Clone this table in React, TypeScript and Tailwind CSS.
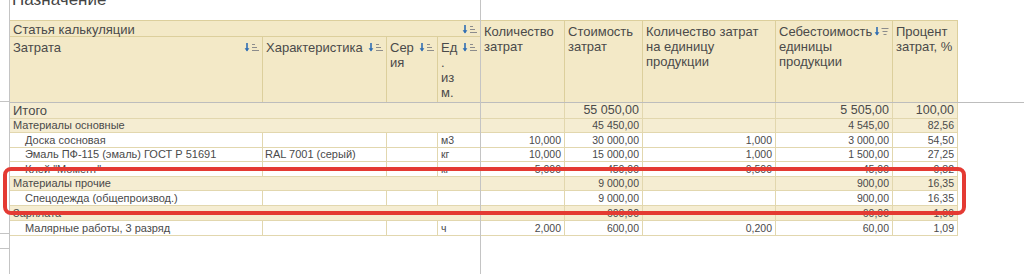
import React from "react"

// column template shared by header and body (widths include the right border)
const COLS = "grid grid-cols-[253px_124px_51px_43px_84px_78px_133px_117px_65px]"

type Row = {
    kind: "total" | "group" | "item"
    name: string
    h: string
    feature?: string
    unit?: string
    qty?: string
    cost?: string
    perUnit?: string
    unitCost?: string
    pct?: string
}

const ROWS: Row[] = [
    { kind: "total", name: "Итого", h: "h-[16px]", cost: "55 050,00", unitCost: "5 505,00", pct: "100,00" },
    { kind: "group", name: "Материалы основные", h: "h-[14px]", cost: "45 450,00", unitCost: "4 545,00", pct: "82,56" },
    { kind: "item", name: "Доска сосновая", h: "h-[15px]", unit: "м3", qty: "10,000", cost: "30 000,00", perUnit: "1,000", unitCost: "3 000,00", pct: "54,50" },
    { kind: "item", name: "Эмаль ПФ-115 (эмаль) ГОСТ Р 51691", h: "h-[14px]", feature: "RAL 7001 (серый)", unit: "кг", qty: "10,000", cost: "15 000,00", perUnit: "1,000", unitCost: "1 500,00", pct: "27,25" },
    { kind: "item", name: "Клей \"Момент\"", h: "h-[15px]", unit: "кг", qty: "5,000", cost: "450,00", perUnit: "0,500", unitCost: "45,00", pct: "0,82" },
    { kind: "group", name: "Материалы прочие", h: "h-[14px]", cost: "9 000,00", unitCost: "900,00", pct: "16,35" },
    { kind: "item", name: "Спецодежда (общепроизвод.)", h: "h-[15px]", cost: "9 000,00", unitCost: "900,00", pct: "16,35" },
    { kind: "group", name: "Зарплата", h: "h-[15px]", cost: "600,00", unitCost: "60,00", pct: "1,09" },
    { kind: "item", name: "Малярные работы, 3 разряд", h: "h-[15px]", unit: "ч", qty: "2,000", cost: "600,00", perUnit: "0,200", unitCost: "60,00", pct: "1,09" },
]

//blue arrow + lines, the 1C sort marker
function SortIcon({ filter = false }: { filter?: boolean }) {
    return (
        <svg width="16" height="11" viewBox="0 0 16 11" className="shrink-0">
            <path d="M3 1v7.5" stroke="#2f6db3" strokeWidth="1.6" />
            <path d="M0.6 6.2 3 9.6 5.4 6.2z" fill="#2f6db3" />
            {filter ? (
                <g stroke="#8c8c8c" strokeWidth="1">
                    <path d="M7.5 2.5h7" />
                    <path d="M8.5 5.5h5" />
                    <path d="M9.5 8.5h3" />
                </g>
            ) : (
                <g stroke="#8c8c8c" strokeWidth="1">
                    <path d="M8 2.5h3" />
                    <path d="M8 5.5h5" />
                    <path d="M8 8.5h7" />
                </g>
            )}
        </svg>
    )
}

function HeadCell({ children, icon, className = "" }: { children: React.ReactNode, icon?: "sort" | "filter", className?: string }) {
    return (
        <div className={`flex items-start justify-between border-r border-b border-[#dccf9c] pl-[3px] pr-[2px] pt-[3px] ${className}`}>
            <div className="leading-[15px]">{children}</div>
            {icon && <div className="pt-[2px]"><SortIcon filter={icon === "filter"} /></div>}
        </div>
    )
}

function Num({ v, big }: { v?: string, big?: boolean }) {
    return (
        <div className={`flex items-center justify-end border-r border-[#e2d7ae] pr-[3px] ${big ? "text-[12.5px]" : "text-[10.5px]"}`}>
            {v}
        </div>
    )
}

function BodyRow({ r }: { r: Row }) {
    const shaded = r.kind !== "item"
    const big = r.kind === "total"
    return (
        <div className={`${COLS} ${r.h} border-b border-[#e2d7ae] leading-none ${shaded ? "bg-[#f5edd2]" : "bg-white"}`}>
            {shaded ? (
                <div className={`col-span-4 flex items-center border-r border-[#e2d7ae] pl-[3px] ${big ? "text-[13px]" : "text-[11px]"}`}>{r.name}</div>
            ) : (
                <>
                    <div className="flex items-center border-r border-[#e2d7ae] pl-[15px] text-[11px] whitespace-nowrap overflow-hidden">{r.name}</div>
                    <div className="flex items-center border-r border-[#e2d7ae] pl-[2px] text-[11px] whitespace-nowrap overflow-hidden">{r.feature}</div>
                    <div className="border-r border-[#e2d7ae]" />
                    <div className="flex items-center border-r border-[#e2d7ae] pl-[3px] text-[10.5px]">{r.unit}</div>
                </>
            )}
            <Num v={r.qty} big={big} />
            <Num v={r.cost} big={big} />
            <Num v={r.perUnit} big={big} />
            <Num v={r.unitCost} big={big} />
            <Num v={r.pct} big={big} />
        </div>
    )
}

export default function App() {
    return (
        <div className="relative flex w-[1024px] h-[274px] overflow-hidden bg-white text-[#4a4a4a] font-['Liberation_Sans',Arial,sans-serif]">
            {/* left panel strip */}
            <div className="w-[10px] shrink-0 border-r border-[#c4c4c4] flex flex-col">
                <div className="h-[102px] border-b border-[#c4c4c4]" />
                <div className="h-[132px] border-b border-[#c4c4c4]" />
                <div className="h-[15px] border-b border-[#c4c4c4]" />
            </div>

            <div className="flex-1 flex flex-col">
                {/* title, scrolled off the top */}
                <div className="h-[20px] overflow-hidden pl-[2px]">
                    <div className="mt-[-10px] text-[17px] leading-[20px] text-[#444]">Назначение</div>
                </div>

                {/* header */}
                <div className="flex border-b border-[#bdbdbd]">
                    <div className={`${COLS} grid-rows-[16px_65px] bg-[#f3e9c7] text-[13px] border-t border-[#dccf9c]`}>
                        <HeadCell icon="sort" className="col-span-4 !pt-[1px]">Статья калькуляции</HeadCell>
                        <HeadCell className="row-span-2 !border-b-0">Количество<br />затрат</HeadCell>
                        <HeadCell className="row-span-2 !border-b-0">Стоимость<br />затрат</HeadCell>
                        <HeadCell className="row-span-2 !border-b-0">Количество затрат<br />на единицу<br />продукции</HeadCell>
                        <HeadCell icon="filter" className="row-span-2 !border-b-0">Себестоимость<br />единицы<br />продукции</HeadCell>
                        <HeadCell className="row-span-2 !border-b-0">Процент<br />затрат, %</HeadCell>
                        <HeadCell icon="sort" className="!border-b-0">Затрата</HeadCell>
                        <HeadCell icon="sort" className="!border-b-0">Характеристика</HeadCell>
                        <HeadCell icon="sort" className="!border-b-0">Сер<br />ия</HeadCell>
                        <HeadCell icon="sort" className="!border-b-0">Ед<br />.<br />из<br />м.</HeadCell>
                    </div>
                    <div className="flex-1" />
                </div>

                {/* body */}
                <div className="flex flex-col items-start">
                    {ROWS.map((r, i) => <BodyRow key={i} r={r} />)}
                </div>
            </div>

            {/* window divider */}
            <div className="absolute left-[480px] top-0 h-full w-px bg-[#c4c4c4]" />

            {/* red annotation frame */}
            <div className="absolute left-[3px] top-[167px] w-[963px] h-[48px] border-[4px] border-[#e43a33] rounded-[8px]" />
        </div>
    )
}
